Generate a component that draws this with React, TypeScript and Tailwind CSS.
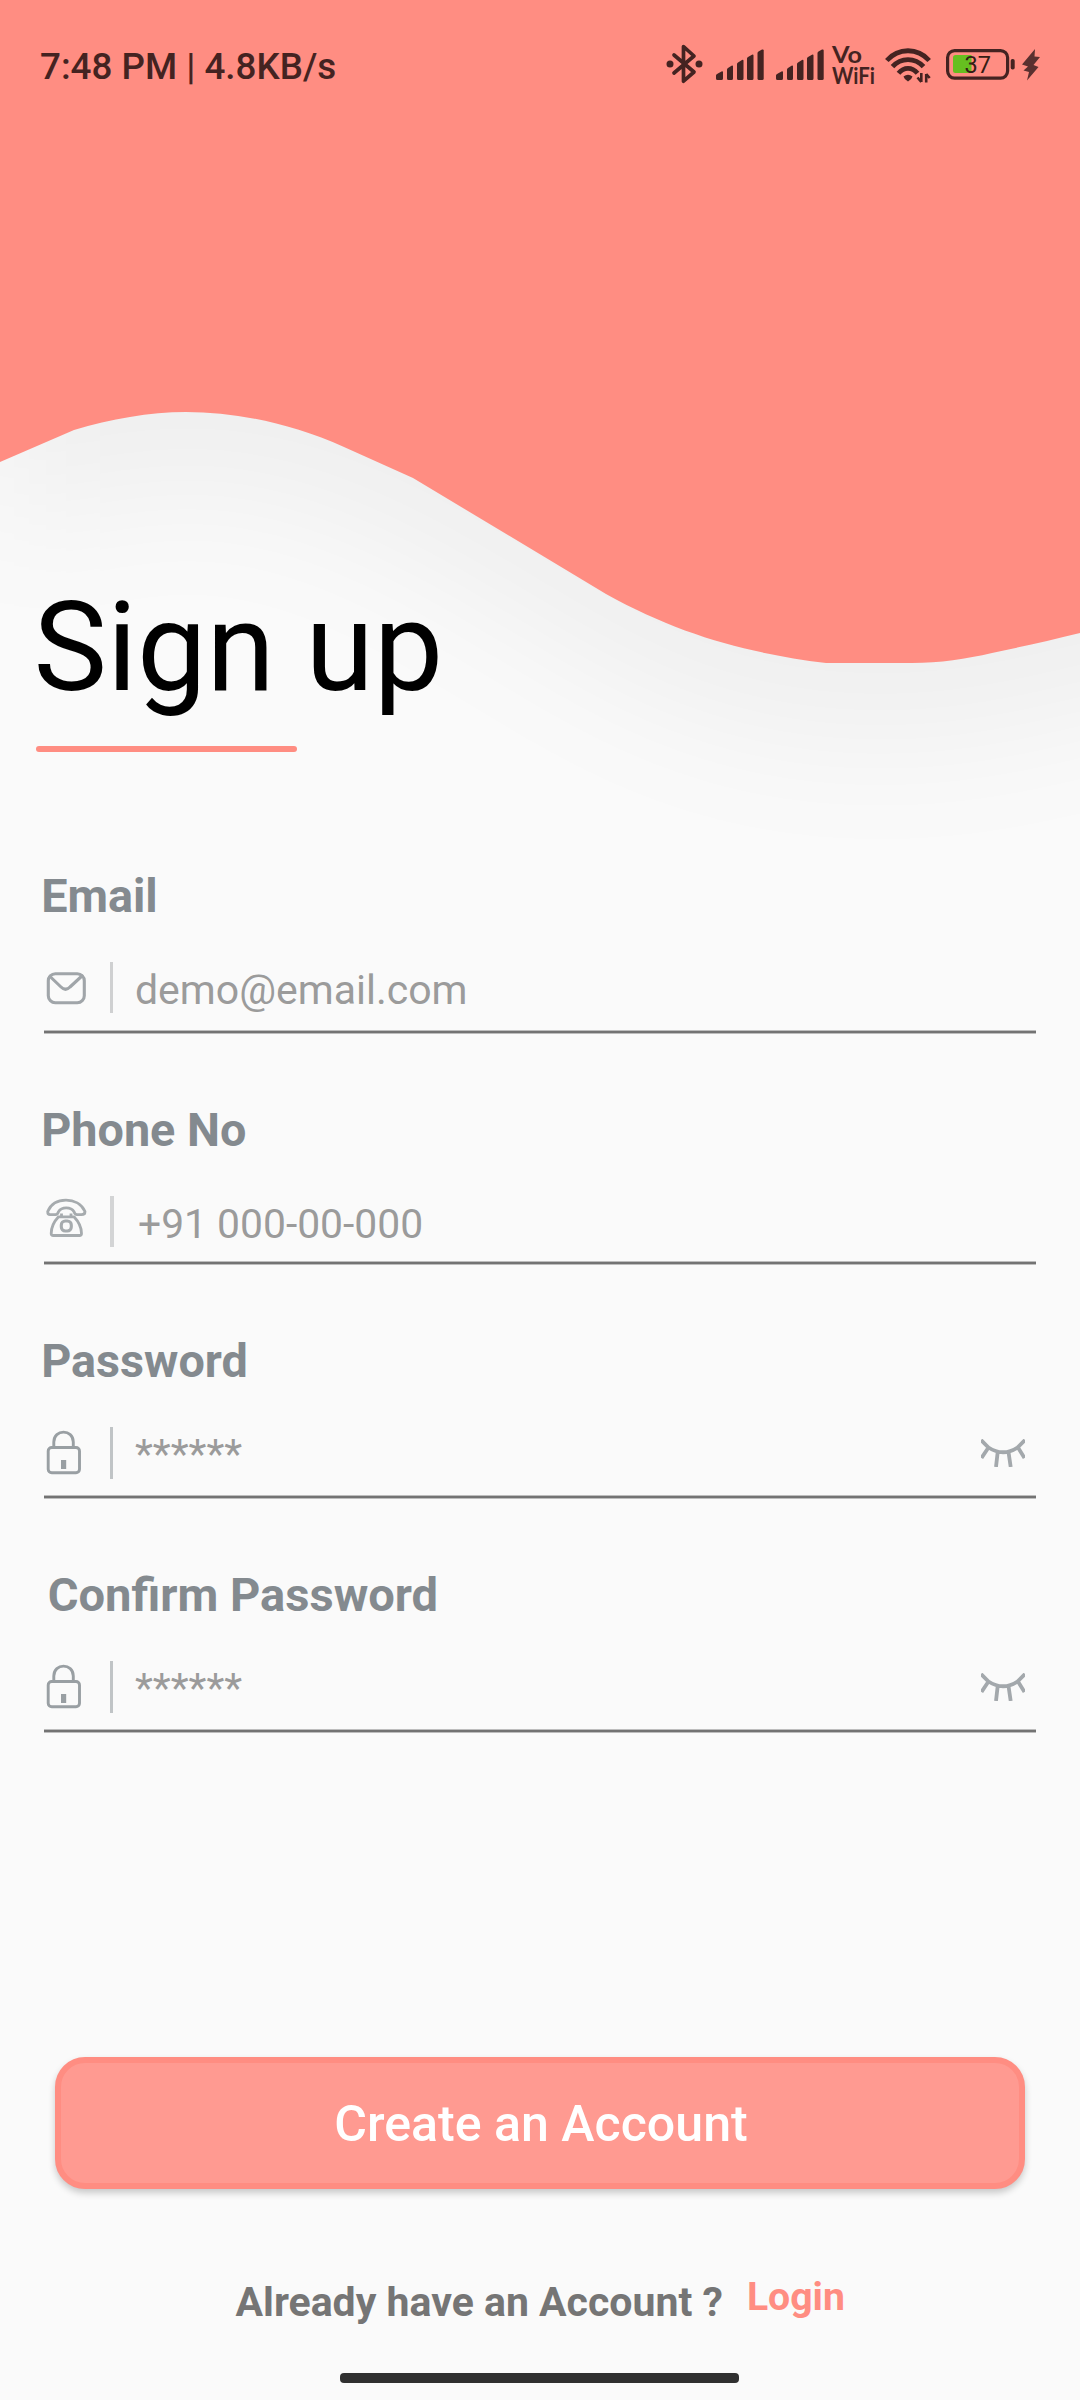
import type { ReactNode } from "react";

const WAVE =
  "M0 0H1080V633C1048 641 1020 647 992 653C966 659 940 663 912 663H826C747 653 680 635 606 594L413 478L344 447C290 423 236 412 186 412C149 412 111 419 74 430L0 462Z";

function Wave() {
  return (
    <svg className="pointer-events-none absolute inset-0" width="1080" height="960" viewBox="0 0 1080 960">
      <defs>
        <filter id="soft" filterUnits="userSpaceOnUse" x="-250" y="-250" width="1600" height="1300">
          <feGaussianBlur stdDeviation="62" />
        </filter>
      </defs>
      <path
        d="M0 -250H1180V610L1080 633C1020 650 960 663 912 663H826C747 653 680 635 606 594L413 478L344 447C290 423 236 412 186 412C149 412 111 419 74 430L0 462Z"
        transform="translate(0 78)"
        fill="#000"
        fillOpacity="0.042"
        filter="url(#soft)"
      />
      <path d={WAVE} fill="#ff8d82" />
    </svg>
  );
}

function Bluetooth() {
  return (
    <svg width="37" height="40" viewBox="0 0 37 40" fill="none" stroke="#442321" strokeWidth="3.7" strokeLinejoin="round" strokeLinecap="round">
      <path d="M8 11L28 28L17.5 37.2V2.5L28 12L8 29" />
      <circle cx="4" cy="20" r="3.5" fill="#442321" stroke="none" />
      <circle cx="33" cy="20" r="3.5" fill="#442321" stroke="none" />
    </svg>
  );
}

function Signal() {
  return (
    <svg width="48" height="31" viewBox="0 0 48 31" fill="#442321">
      <path d="M0 26.5Q0 25.5 1 25L5.5 22.4Q7 21.8 7 23.3V29.5Q7 31 5.5 31H1.5Q0 31 0 29.5Z" />
      <path d="M11 20.5Q11 19.5 12 19L15.5 16.7Q17 16 17 17.5V29.5Q17 31 15.5 31H12.5Q11 31 11 29.5Z" />
      <path d="M21 15Q21 14 22 13.4L26 11Q27.5 10.3 27.5 11.8V29.5Q27.5 31 26 31H22.5Q21 31 21 29.5Z" />
      <path d="M31 9.5Q31 8.5 32 8L36 5.7Q37.5 5 37.5 6.5V29.5Q37.5 31 36 31H32.5Q31 31 31 29.5Z" />
      <path d="M41.5 4Q41.5 3 42.5 2.4L46 .5Q47.7 0 47.7 1.5V29.5Q47.7 31 46.2 31H43Q41.5 31 41.5 29.5Z" />
    </svg>
  );
}

function VoWifi() {
  return (
    <svg className="overflow-visible" width="43" height="40" viewBox="0 0 43 40" fill="#442321" fontFamily="Lato" fontWeight="700">
      <text x="0" y="17.5" fontSize="23" textLength="30" lengthAdjust="spacingAndGlyphs">Vo</text>
      <text x="0" y="38.5" fontSize="22" textLength="43" lengthAdjust="spacingAndGlyphs">WiFi</text>
    </svg>
  );
}

function Wifi() {
  return (
    <svg width="47" height="35" viewBox="0 0 47 35" fill="none" stroke="#442321" strokeWidth="4.8">
      <path d="M1.8 12.5C13.5 -.5 32.5 -.5 44.2 12.5" />
      <path d="M7.5 18.7C16 9.2 30 9.2 38.5 18.7" />
      <path d="M13.5 25.2C19 18.7 27 18.7 32.5 25.2" />
      <path d="M18.5 28.5Q23 25 27.5 28.5Q27 31 23 33.5Q19 31 18.5 28.5Z" fill="#442321" stroke="none" />
      <path d="M36.3 25V34M36.3 34L32.5 29.5M41.2 34.5V26M41.2 26L44.7 30" strokeWidth="2.6" />
    </svg>
  );
}

function Battery() {
  return (
    <div className="relative h-[31px] w-[69px]">
      <svg className="absolute inset-0" width="69" height="31" viewBox="0 0 69 31">
        <rect x="1.6" y="1.6" width="60" height="27.5" rx="7" fill="none" stroke="#442321" strokeWidth="3.2" />
        <path d="M9.5 6H25.5V24H9.5Q7 24 7 21.5V8.5Q7 6 9.5 6Z" fill="#66bf20" />
        <rect x="64.7" y="10" width="4" height="10.5" rx="1.8" fill="#442321" />
      </svg>
      <span className="absolute top-px left-[18.5px] text-[23.5px] leading-[31px] text-[#351c14]">37</span>
    </div>
  );
}

function Bolt() {
  return (
    <svg width="18" height="32" viewBox="0 0 18 32" fill="#5a302f">
      <path d="M13 0L0 15.5L6 17.5L1.5 21.5L7 23L5 31.5L16.5 18L11.5 16L18 8L12.5 7.5Z" />
    </svg>
  );
}

const line = "#a0a5a9";

function MailIcon() {
  return (
    <svg width="46" height="52" viewBox="0 0 46 52" fill="none" stroke={line} strokeWidth="3.1" strokeLinejoin="round">
      <rect x="4.3" y="11.7" width="36" height="29" rx="7" />
      <path d="M5 13.5L17 25Q21.5 29.5 26 25L39 13" />
    </svg>
  );
}

function PhoneIcon() {
  return (
    <svg width="46" height="52" viewBox="0 0 46 52" fill="none" stroke="#a6abae" strokeWidth="2.8" strokeLinejoin="round">
      <path d="M3.7 15.5C7 8 14 4.2 22 4.2S37.5 8 41 15.5C41 17.5 39.5 18.7 37.5 18.7H33C31 18.7 30.5 17.5 30 15.7C27 10.5 17.500 10.500 14.500 15.700C14 17.500 13.500 18.700 11.500 18.700H6C4.500 18.700 3.700 17.500 3.700 15.500Z" />
      <path d="M14.500 20.800H30C33 24 37.500 30 37.500 37.500Q37.500 39.500 35.500 39.500H9.200Q7.200 39.500 7.200 37.500C7.200 30 11.500 24 14.500 20.800Z" />
      <path d="M17.500 17.500V20.800M27 17.500V20.800" />
      <rect x="17.300" y="25" width="10" height="10" rx="4" strokeWidth="3.100" />
    </svg>
  );
}

function LockIcon() {
  return (
    <svg width="46" height="52" viewBox="0 0 46 52" fill="none" stroke="#999fa3" strokeWidth="2.900">
      <rect x="4.200" y="20.500" width="31.300" height="25.300" rx="3.500" />
      <path d="M9.800 20V15C9.800 1.800 29.300 1.800 29.300 15V20" />
      <path d="M19.600 33V42" strokeWidth="5.200" />
    </svg>
  );
}

function ClosedEye() {
  return (
    <svg className="mt-3 mr-[11px] ml-auto" width="44" height="28" viewBox="0 0 44 28" fill="none" stroke="#a3a8ac" strokeWidth="3.800">
      <path d="M0 1L7.500 8.500Q22 18 36.500 8.500L44 1M7.500 8.500L0.500 19M16.700 13L15 28M27.500 13L29.700 28M37 8.500L43.500 19" />
    </svg>
  );
}

type FieldProps = {
  label: string;
  labelClass?: string;
  rowClass: string;
  dividerClass: string;
  icon: ReactNode;
  hint: string;
  hintClass: string;
  secret?: boolean;
};

function Field({ label, labelClass = "pl-[41.2px] text-[46.75px]", rowClass, dividerClass, icon, hint, hintClass, secret }: FieldProps) {
  return (
    <div>
      <div className={`h-14 leading-[56px] font-bold whitespace-nowrap text-[#848a8f] ${labelClass}`}>{label}</div>
      <div className={`mx-11 flex items-start pt-[38px] ${rowClass}`}>
        {icon}
        <div className={`ml-5 ${dividerClass}`} />
        <div className={`leading-[48px] text-[#9b9b9b] ${hintClass}`}>{hint}</div>
        {secret && <ClosedEye />}
      </div>
      <div className="mx-11 h-1 border-y border-[#bdbdbd] bg-[#737373]" />
    </div>
  );
}

export default function App() {
  return (
    <div className="relative h-[2400px] w-[1080px] overflow-hidden bg-[#fafafa] font-['Roboto',sans-serif]">
      <Wave />
      <div className="relative flex flex-col">
        <header className="flex h-[576px] items-start pl-10">
          <div className="mt-[44.5px] text-[36.75px] leading-[44px] font-medium whitespace-nowrap text-[#442321]">7:48 PM | 4.8KB/s</div>
          <div className="mt-11 mr-10 ml-auto flex items-start">
            <Bluetooth />
            <div className="mt-[5px] ml-[13px]"><Signal /></div>
            <div className="mt-[5px] ml-3"><Signal /></div>
            <div className="mt-px ml-2"><VoWifi /></div>
            <div className="mt-1 ml-[10px]"><Wifi /></div>
            <div className="mt-[5px] ml-[14px]"><Battery /></div>
            <div className="mt-[5px] ml-[7px]"><Bolt /></div>
          </div>
        </header>

        <h1 className="h-36 pl-[33.5px] text-[123.75px] leading-[144px] text-black">Sign up</h1>
        <div className="mt-[26px] ml-9 h-[6px] w-[261px] rounded-full bg-[#ff8d82]" />

        <form className="mt-[116px] flex flex-col gap-[68px]">
          <Field
            label="Email"
            rowClass="h-[106px]"
            dividerClass="h-[51px] w-[3px] bg-[#cfd0d1]"
            icon={<MailIcon />}
            hint="demo@email.com"
            hintClass="mt-1 ml-[22px] text-[41px]"
          />
          <Field
            label="Phone No"
            rowClass="h-[103px]"
            dividerClass="h-[51px] w-[4px] bg-[#d3d4d5]"
            icon={<PhoneIcon />}
            hint="+91 000-00-000"
            hintClass="mt-1 ml-6 text-[40.8px]"
          />
          <Field
            label="Password"
            rowClass="h-[106px]"
            dividerClass="h-[52px] w-[3px] bg-[#c0c4c6]"
            icon={<LockIcon />}
            hint="******"
            hintClass="mt-[3px] ml-[22px] text-[41.5px]"
            secret
          />
          <Field
            label="Confirm Password"
            labelClass="pl-[47.7px] text-[47.1px]"
            rowClass="h-[106px]"
            dividerClass="h-[52px] w-[3px] bg-[#c0c4c6]"
            icon={<LockIcon />}
            hint="******"
            hintClass="mt-[3px] ml-[22px] text-[41.5px]"
            secret
          />
        </form>

        <button
          type="button"
          className="mx-[55px] mt-[324px] flex h-[132px] items-center justify-center rounded-[30px] border-[6px] border-[#ff8d82] bg-[#ff9a91] pt-1 pl-[2px] text-[50.1px] font-medium text-white shadow-[0_4px_7px_rgba(0,0,0,0.2)]"
        >
          Create an Account
        </button>

        <div className="mt-[83px] flex items-start pl-[235.5px] leading-[48px] font-bold whitespace-nowrap">
          <span className="mt-[6px] text-[41px] text-[#757575]">Already have an Account ?</span>
          <a className="mt-px ml-6 text-[39.2px] text-[#ff8d82]">Login</a>
        </div>

        <div className="mt-[47px] ml-[340px] h-[10px] w-[399px] rounded-[4px] bg-[#303030]" />
      </div>
    </div>
  );
}
